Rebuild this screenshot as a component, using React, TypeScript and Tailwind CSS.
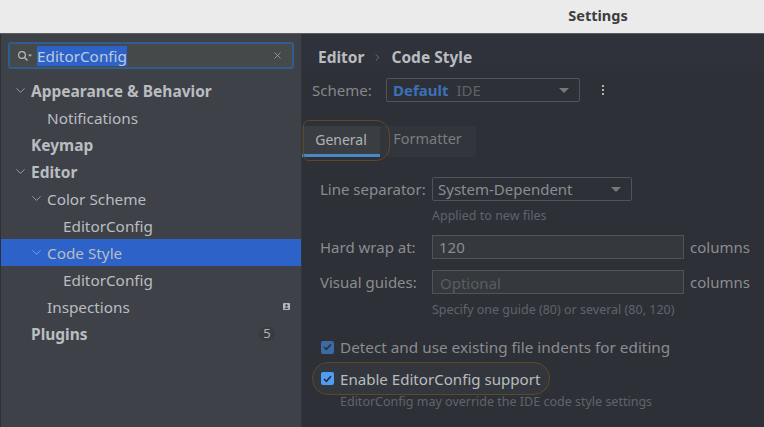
import { ChevronDown, ChevronRight, X } from "lucide-react";

const font = "font-['Noto_Sans',sans-serif]";

interface TreeRow {
    label: string;
    indent: string;
    bold?: boolean;
    open?: boolean;
    selected?: boolean;
    right?: React.ReactNode;
}

const rows: TreeRow[] = [
    { label: "Appearance & Behavior", indent: "pl-[30px]", bold: true, open: true },
    { label: "Notifications", indent: "pl-[46px]" },
    { label: "Keymap", indent: "pl-[30px]", bold: true },
    { label: "Editor", indent: "pl-[30px]", bold: true, open: true },
    { label: "Color Scheme", indent: "pl-[46px]", open: true },
    { label: "EditorConfig", indent: "pl-[62px]" },
    { label: "Code Style", indent: "pl-[46px]", open: true, selected: true },
    { label: "EditorConfig", indent: "pl-[62px]" },
    {
        label: "Inspections",
        indent: "pl-[46px]",
        right: (
            <svg width="7" height="7" viewBox="0 0 7 7" className="mr-[11px]">
                <rect width="7" height="7" rx="1" fill="#b4b8bd" />
                <circle cx="3.5" cy="2.5" r="1.2" fill="#3e4148" />
                <path d="M1.5 6 C1.5 4 5.5 4 5.5 6 Z" fill="#3e4148" />
            </svg>
        ),
    },
    {
        label: "Plugins",
        indent: "pl-[30px]",
        bold: true,
        right: (
            <span className="mr-[26px] flex h-[14px] w-[16px] items-center justify-center rounded-full bg-[#383b41] text-[13px] text-[#b0b3b6]">
                5
            </span>
        ),
    },
];

const Tree = ({ row }: { row: TreeRow }) => (
    <div
        className={`relative flex h-[27px] items-center justify-between ${row.indent} ${
            row.selected ? "bg-[#2d62c8]" : ""
        }`}
    >
        {row.open && (
            <ChevronDown
                size={15}
                strokeWidth={1.3}
                className={`absolute top-[6px] ${row.indent === "pl-[30px]" ? "left-[12px]" : "left-[28px]"} ${
                    row.selected ? "text-[#7fb0f0]" : "text-[#aeb2b6]"
                }`}
            />
        )}
        <span className={`pt-[2px] text-[#b9bdc0] ${row.bold ? "text-[15.5px] font-bold" : "text-[15.3px]"}`}>
            {row.label}
        </span>
        {row.right}
    </div>
);

const Sidebar = () => (
    <div className="flex w-[300px] shrink-0 flex-col bg-[#3e4148]">
        <div className="mx-[7px] mt-[8px] flex h-[27px] items-center rounded-[3px] border-2 border-[#2f5d90] bg-[#45494a] pl-[7px] pr-[9px]">
            <svg width="16" height="12" viewBox="0 0 16 12" className="shrink-0">
                <circle cx="5" cy="5" r="3.4" fill="none" stroke="#b4b8bb" strokeWidth="1.2" />
                <path d="M7.5 7.5 L10.5 10.5" stroke="#b4b8bb" strokeWidth="1.4" />
                <path d="M11 4.5 h4 l-2 2.2 z" fill="#b4b8bb" />
            </svg>
            <span className="ml-[4px] bg-[#2d62c8] text-[15.3px] leading-[20px] text-[#bcc9de]">EditorConfig</span>
            <X size={11} strokeWidth={1.6} className="ml-auto text-[#a8acaf]" />
        </div>
        <div className="mt-[8px]">
            {rows.map((row, i) => (
                <Tree key={i} row={row} />
            ))}
        </div>
    </div>
);

const Label = ({ children }: { children: React.ReactNode }) => (
    <span className="w-[112px] shrink-0 text-[15px] text-[#8a8d90]">{children}</span>
);

const Hint = ({ children, className }: { children: React.ReactNode; className?: string }) => (
    <div className={`text-[12.5px] leading-[18px] text-[#60646a] ${className ?? ""}`}>{children}</div>
);

const Check = ({ dim }: { dim?: boolean }) => (
    <span
        className={`flex h-[13px] w-[13px] shrink-0 items-center justify-center rounded-[2px] ${
            dim ? "bg-[#3b6ba5]" : "bg-[#4f9cf5]"
        }`}
    >
        <svg width="9" height="8" viewBox="0 0 9 8">
            <path d="M1 4 L3.4 6.4 L8 1.2" fill="none" stroke={dim ? "#2d3038" : "#2b2d33"} strokeWidth="1.6" />
        </svg>
    </span>
);

const Main = () => (
    <div className="flex min-w-0 flex-1 flex-col border-l border-[#33363c] bg-[#2d3037]">
        <div className="flex h-[37px] items-center bg-[#2f323a] pl-[16px] pt-[10px] text-[15.5px] font-bold text-[#b9bdc0]">
            Editor
            <ChevronRight size={11} strokeWidth={1.5} className="mx-[8px] text-[#8a8d90]" />
            Code Style
        </div>
        <div className="mt-[7px] flex items-center pl-[10px]">
            <span className="w-[74px] text-[15px] text-[#85888c]">Scheme:</span>
            <div className="flex h-[24px] w-[194px] items-center rounded-[2px] border border-[#50545a] pl-[6px] pr-[10px]">
                <span className="text-[15px] font-bold text-[#3c70b6]">Default</span>
                <span className="ml-[8px] text-[15px] text-[#5e6268]">IDE</span>
                <span className="ml-auto h-0 w-0 border-x-[5px] border-t-[5px] border-x-transparent border-t-[#75787c]" />
            </div>
            <div className="ml-[22px] flex flex-col gap-[2px]">
                <span className="h-[2px] w-[2px] bg-[#b0b3b6]" />
                <span className="h-[2px] w-[2px] bg-[#b0b3b6]" />
                <span className="h-[2px] w-[2px] bg-[#b0b3b6]" />
            </div>
        </div>
        <div className="relative mt-[24px] flex h-[31px] items-stretch">
            <div className="flex w-[78px] items-center justify-center border-b-[3px] border-[#4a88c7] bg-[#3a3e43] pb-[1px] text-[14px] text-[#b0b4b8]">
                General
            </div>
            <div className="flex w-[96px] items-center justify-center bg-[#32353b] pb-[5px] pr-[1px] text-[14.5px] text-[#7a7d80]">
                Formatter
            </div>
            <div className="absolute -top-[6px] left-[1px] h-[41px] w-[87px] rounded-r-[14px] rounded-l-[6px] border border-[#5c4a26]" />
        </div>
        <div className="mt-[20px] flex items-center pl-[18px]">
            <Label>Line separator:</Label>
            <div className="flex h-[24px] w-[200px] items-center rounded-[2px] border border-[#50545a] pl-[5px] pr-[10px] text-[15px] text-[#8a8d90]">
                System-Dependent
                <span className="ml-auto h-0 w-0 border-x-[5px] border-t-[5px] border-x-transparent border-t-[#75787c]" />
            </div>
        </div>
        <Hint className="ml-[130px] mt-[6px]">Applied to new files</Hint>
        <div className="mt-[10px] flex items-center pl-[18px]">
            <Label>Hard wrap at:</Label>
            <div className="flex h-[24px] w-[252px] items-center border border-[#50545a] bg-[#35383c] pl-[6px] text-[15px] text-[#8a8d90]">
                120
            </div>
            <span className="ml-[6px] text-[15px] text-[#8a8d90]">columns</span>
        </div>
        <div className="mt-[11px] flex items-center pl-[18px]">
            <Label>Visual guides:</Label>
            <div className="flex h-[24px] w-[252px] items-center border border-[#50545a] bg-[#35383c] pl-[7px] pt-[2px] text-[15px] text-[#5a5e62]">
                Optional
            </div>
            <span className="ml-[6px] text-[15px] text-[#8a8d90]">columns</span>
        </div>
        <Hint className="ml-[130px] mt-[7px]">Specify one guide (80) or several (80, 120)</Hint>
        <div className="mt-[17px] flex items-center gap-[6px] pl-[19px]">
            <Check dim />
            <span className="text-[15.3px] text-[#8a8d90]">Detect and use existing file indents for editing</span>
        </div>
        <div className="relative mt-[8px] flex h-[24px] items-center gap-[6px] pl-[19px]">
            <div className="absolute left-[10px] top-[-5px] h-[33px] w-[238px] rounded-[16px] border border-[#5c4a26] bg-[#33363c]" />
            <span className="relative">
                <Check />
            </span>
            <span className="relative text-[15.1px] text-[#b9bdc0]">Enable EditorConfig support</span>
        </div>
        <Hint className="ml-[38px] mt-[2px]">EditorConfig may override the IDE code style settings</Hint>
    </div>
);

export default function App() {
    return (
        <div className={`flex h-[427px] w-[764px] flex-col overflow-hidden bg-[#2d3037] ${font}`}>
            <div className="relative flex h-[34px] shrink-0 items-center justify-center border-b border-[#5a5d60] bg-[#ebebeb]">
                <span className="ml-[432px] mb-[2px] text-[14.5px] font-bold text-[#3d3d3d]">Settings</span>
            </div>
            <div className="flex min-h-0 flex-1 pl-[1px]">
                <Sidebar />
                <Main />
            </div>
        </div>
    );
}
